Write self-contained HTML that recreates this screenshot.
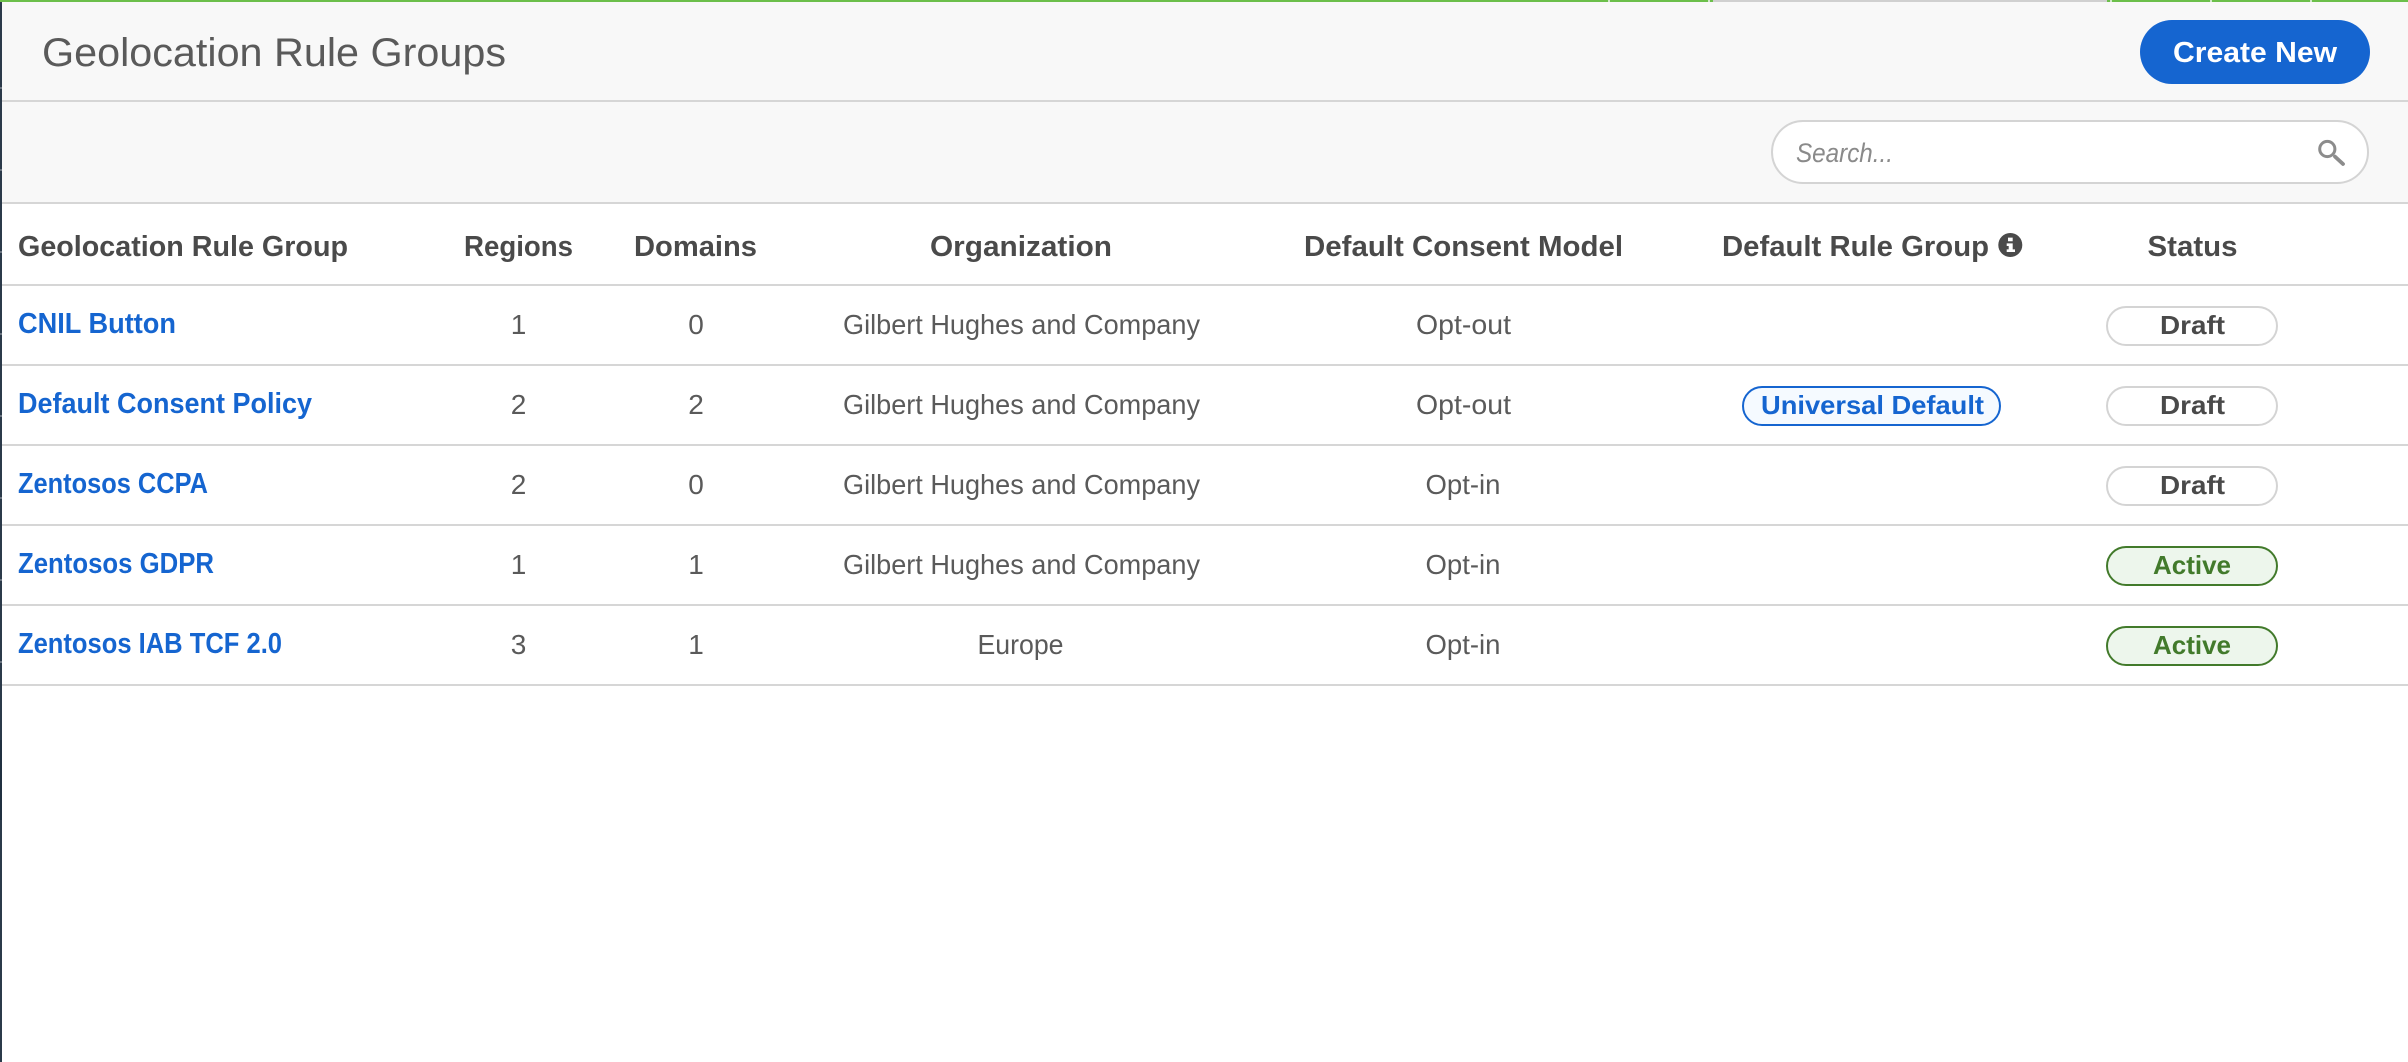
<!DOCTYPE html>
<html lang="en">
<head>
<meta charset="utf-8">
<title>Geolocation Rule Groups</title>
<style>
html,body{margin:0;padding:0;width:2408px;height:1062px;overflow:hidden;background:#fff;}
body{position:relative;font-family:"Liberation Sans",sans-serif;}
.a{position:absolute;box-sizing:border-box;}
.line{position:absolute;left:2px;width:2406px;height:2px;background:#d6d6d6;}
.pill{position:absolute;box-sizing:border-box;height:40px;border-radius:20px;border:2px solid #d4d4d4;background:#fff;}
.pill.active{background:#edf6ec;border-color:#427a2b;}
.pill.uni{background:#f5faff;border-color:#1565d0;}
.sep{position:absolute;top:0;width:2px;height:2px;background:#d4e8cc;}
.tick{position:absolute;left:0;width:2px;height:2px;background:#6a7480;}
svg{position:absolute;left:0;top:0;}
text{font-family:"Liberation Sans",sans-serif;}
.h{font-size:29px;font-weight:700;fill:#4a4a4a;}
.l{font-size:29px;font-weight:700;fill:#1565d0;}
.c{font-size:28px;fill:#5a5a5a;}
.p{font-size:26px;font-weight:700;}
</style>
</head>
<body>
<div class="a" style="left:0;top:0;width:2408px;height:202px;background:#f8f8f8;"></div>
<div class="a" style="left:0;top:0;width:2px;height:1062px;background:#2b3a4a;"></div>
<div class="a" style="left:0;top:740px;width:2px;height:80px;background:#203040;"></div>
<div class="tick" style="top:87px"></div><div class="tick" style="top:169px"></div><div class="tick" style="top:251px"></div><div class="tick" style="top:333px"></div><div class="tick" style="top:415px"></div><div class="tick" style="top:497px"></div><div class="tick" style="top:579px"></div><div class="tick" style="top:661px"></div>
<div class="a" style="left:0;top:0;width:2408px;height:2px;background:#6cbf4b;"></div>
<div class="a" style="left:1713px;top:0;width:394px;height:2px;background:#d0d0d0;"></div>
<div class="sep" style="left:1608px"></div><div class="sep" style="left:1708px"></div><div class="sep" style="left:2110px"></div><div class="sep" style="left:2210px"></div><div class="sep" style="left:2310px"></div>

<div class="line" style="top:100px"></div>
<div class="line" style="top:202px"></div>
<div class="line" style="top:284px"></div>
<div class="line" style="top:364px"></div>
<div class="line" style="top:444px"></div>
<div class="line" style="top:524px"></div>
<div class="line" style="top:604px"></div>
<div class="line" style="top:684px"></div>

<div class="a" style="left:2140px;top:20px;width:230px;height:64px;border-radius:32px;background:#1565d0;"></div>
<div class="a" style="left:1771px;top:120px;width:598px;height:64px;border-radius:32px;border:2px solid #d4d4d4;background:#fff;"></div>

<div class="pill" style="left:2106px;top:306px;width:172px"></div>
<div class="pill" style="left:2106px;top:386px;width:172px"></div>
<div class="pill" style="left:2106px;top:466px;width:172px"></div>
<div class="pill active" style="left:2106px;top:546px;width:172px"></div>
<div class="pill active" style="left:2106px;top:626px;width:172px"></div>
<div class="pill uni" style="left:1742px;top:386px;width:259px"></div>

<svg width="2408" height="1062" viewBox="0 0 2408 1062" xmlns="http://www.w3.org/2000/svg">
<text x="42" y="66" font-size="40" fill="#5a5a5a" textLength="464" lengthAdjust="spacingAndGlyphs">Geolocation Rule Groups</text>
<text x="2173" y="62" font-size="29" font-weight="700" fill="#fff" textLength="164" lengthAdjust="spacingAndGlyphs">Create New</text>
<text x="1796" y="162" font-size="27" font-style="italic" fill="#8a8a8a" textLength="97" lengthAdjust="spacingAndGlyphs">Search...</text>
<circle cx="2327.3" cy="149" r="7.6" fill="none" stroke="#8c8c8c" stroke-width="3"/>
<path d="M2335 156.6L2343 164" fill="none" stroke="#8c8c8c" stroke-width="3.8" stroke-linecap="round"/>

<text class="h" x="18" y="256" textLength="330" lengthAdjust="spacingAndGlyphs">Geolocation Rule Group</text>
<text class="h" x="464" y="256" textLength="109" lengthAdjust="spacingAndGlyphs">Regions</text>
<text class="h" x="634" y="256" textLength="123" lengthAdjust="spacingAndGlyphs">Domains</text>
<text class="h" x="930" y="256" textLength="182" lengthAdjust="spacingAndGlyphs">Organization</text>
<text class="h" x="1304" y="256" textLength="319" lengthAdjust="spacingAndGlyphs">Default Consent Model</text>
<text class="h" x="1722" y="256" textLength="267" lengthAdjust="spacingAndGlyphs">Default Rule Group</text>
<circle cx="2010.3" cy="245" r="12" fill="#4a4a4a"/>
<path d="M2008 237.6h4.7v3.6H2008zM2006.7 243.4h6v6h2.3v2.6h-8.3v-2.6h2v-3.4h-2z" fill="#fff"/>
<text class="h" x="2147.5" y="256" textLength="90" lengthAdjust="spacingAndGlyphs">Status</text>

<text class="l" x="18" y="333" textLength="158" lengthAdjust="spacingAndGlyphs">CNIL Button</text>
<text class="l" x="18" y="413" textLength="294" lengthAdjust="spacingAndGlyphs">Default Consent Policy</text>
<text class="l" x="18" y="493" textLength="190" lengthAdjust="spacingAndGlyphs">Zentosos CCPA</text>
<text class="l" x="18" y="573" textLength="196" lengthAdjust="spacingAndGlyphs">Zentosos GDPR</text>
<text class="l" x="18" y="653" textLength="264" lengthAdjust="spacingAndGlyphs">Zentosos IAB TCF 2.0</text>

<g text-anchor="middle">
<text class="c" x="518.5" y="334">1</text><text class="c" x="518.5" y="414">2</text><text class="c" x="518.5" y="494">2</text><text class="c" x="518.5" y="574">1</text><text class="c" x="518.5" y="654">3</text>
<text class="c" x="696" y="334">0</text><text class="c" x="696" y="414">2</text><text class="c" x="696" y="494">0</text><text class="c" x="696" y="574">1</text><text class="c" x="696" y="654">1</text>
</g>

<text class="c" x="843" y="334" textLength="357" lengthAdjust="spacingAndGlyphs">Gilbert Hughes and Company</text>
<text class="c" x="843" y="414" textLength="357" lengthAdjust="spacingAndGlyphs">Gilbert Hughes and Company</text>
<text class="c" x="843" y="494" textLength="357" lengthAdjust="spacingAndGlyphs">Gilbert Hughes and Company</text>
<text class="c" x="843" y="574" textLength="357" lengthAdjust="spacingAndGlyphs">Gilbert Hughes and Company</text>
<text class="c" x="977.5" y="654" textLength="86" lengthAdjust="spacingAndGlyphs">Europe</text>

<text class="c" x="1416" y="334" textLength="95" lengthAdjust="spacingAndGlyphs">Opt-out</text>
<text class="c" x="1416" y="414" textLength="95" lengthAdjust="spacingAndGlyphs">Opt-out</text>
<text class="c" x="1425.5" y="494" textLength="75" lengthAdjust="spacingAndGlyphs">Opt-in</text>
<text class="c" x="1425.5" y="574" textLength="75" lengthAdjust="spacingAndGlyphs">Opt-in</text>
<text class="c" x="1425.5" y="654" textLength="75" lengthAdjust="spacingAndGlyphs">Opt-in</text>

<text class="p" x="2160" y="334" fill="#4a4a4a" textLength="65" lengthAdjust="spacingAndGlyphs">Draft</text>
<text class="p" x="2160" y="414" fill="#4a4a4a" textLength="65" lengthAdjust="spacingAndGlyphs">Draft</text>
<text class="p" x="2160" y="494" fill="#4a4a4a" textLength="65" lengthAdjust="spacingAndGlyphs">Draft</text>
<text class="p" x="2153" y="574" fill="#427a2b" textLength="78" lengthAdjust="spacingAndGlyphs">Active</text>
<text class="p" x="2153" y="654" fill="#427a2b" textLength="78" lengthAdjust="spacingAndGlyphs">Active</text>
<text class="p" x="1761" y="414" fill="#1565d0" textLength="223" lengthAdjust="spacingAndGlyphs">Universal Default</text>
</svg>
</body>
</html>
